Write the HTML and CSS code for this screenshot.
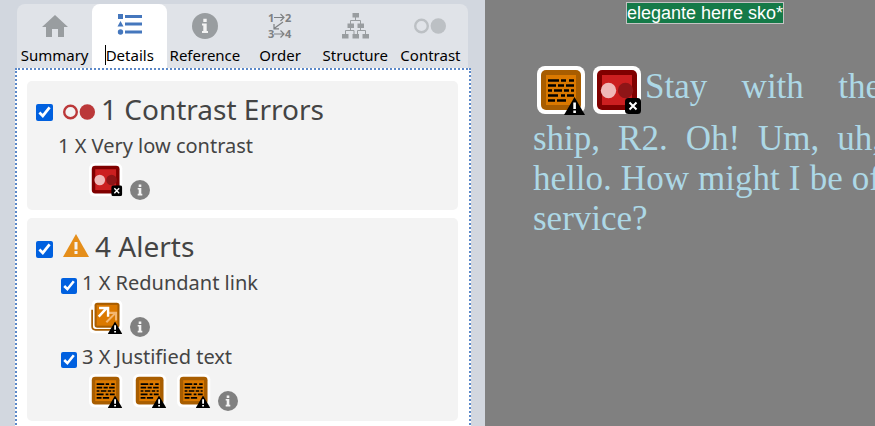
FILE: index.html
```html
<!DOCTYPE html>
<html lang="en">
<head>
<meta charset="utf-8">
<title>Accessibility report</title>
<link rel="stylesheet" href="styles.css">
</head>
<body>
<svg class="sprite" aria-hidden="true">
  <symbol id="badge-alert" viewBox="0 0 21 18"><path d="M10.500 0 21 18H0z" fill="#000"/><path d="M9.300 5.500h2.600v6.500H9.300zM9.300 13.500h2.600v2.500H9.300z" fill="#fff"/></symbol>
  <symbol id="badge-error" viewBox="0 0 16 16"><rect width="16" height="16" rx="3.500" fill="#000"/><path d="M4.500 4.500l7 7M11.500 4.500l-7 7" stroke="#fff" stroke-width="2"/></symbol>
  <symbol id="justified" viewBox="0 0 49 49">
    <rect width="48" height="48" rx="8" fill="#fff"/><rect x="4" y="4" width="40" height="40" rx="5" fill="#a85d00"/><rect x="9" y="9" width="30" height="30" fill="#db7900"/>
    <path d="M11 14.500h11m2 0h5m3 0h5M11 19.500h8m2 0h6m2 0h8M11 24.500h4m2 0h8m2 0h5m2 0h3M11 29.500h10m3 0h4m2 0h7M11 34.500h7m2 0h9" stroke="#000" stroke-width="2.500"/>
    <use href="#badge-alert" x="27" y="31" width="21" height="18"/>
  </symbol>
  <symbol id="low-contrast" viewBox="0 0 49 49">
    <rect width="48" height="48" rx="8" fill="#fff"/><rect x="4" y="4" width="40" height="40" rx="5" fill="#800000"/><rect x="9" y="9" width="30" height="30" fill="#cc1f20"/>
    <circle cx="15.500" cy="24.500" r="7.700" fill="#f0b8b8"/><circle cx="32.500" cy="24.500" r="7.700" fill="#8e1517"/>
    <use href="#badge-error" x="32" y="32" width="16" height="16"/>
  </symbol>
  <symbol id="redundant" viewBox="0 0 49 49">
    <path d="M10 0h31a7 7 0 0 1 7 7v31q0 10-8 10H8q-8 0-8-8V17q0-7 4-9 0-8 6-8z" fill="#fff"/>
    <path d="M4.500 14v24q0 5 5 5h27" fill="none" stroke="#a85d00" stroke-width="2.500"/>
    <rect x="8" y="4" width="36" height="36" rx="4" fill="#a85d00"/><rect x="11" y="7" width="30" height="30" fill="#db7900"/>
    <path d="M25 32 37 20M28 18.500h11v11" fill="none" stroke="#f3b671" stroke-width="3"/>
    <path d="M14 24 26 11M14.500 11.500h13V24" fill="none" stroke="#fff" stroke-width="3.500"/>
    <use href="#badge-alert" x="27" y="31" width="21" height="18"/>
  </symbol>
  <symbol id="info" viewBox="0 0 26 26"><circle cx="13" cy="13" r="13" fill="currentColor"/><path class="info-mark" d="M11.300 5.700h3.400v3.300h-3.400zM10 10.500h4.700V18H16v2h-6v-2h1.300v-5.500H10z"/></symbol>
  <symbol id="contrast" viewBox="0 0 32 16"><circle cx="7.500" cy="8" r="6.300" fill="none" stroke="currentColor" stroke-width="2.400"/><circle cx="24.300" cy="8" r="7.700" fill="currentColor"/></symbol>
</svg>

<main class="page">
  <section class="sidebar">
    <nav class="tabs" aria-label="Report views">
      <button class="tab" type="button"><span class="tab-icon"><svg width="26" height="22" viewBox="0 0 26 22"><path d="M13 0 26 12h-4v10h-6v-8h-6v8H4V12H0z" fill="currentColor"/></svg></span>Summary</button>
      <button class="tab active" type="button"><span class="tab-icon"><svg width="25" height="22" viewBox="0 0 25 22"><path d="M1 1h5v5H1zM3.500 8 6.500 13.500h-6zM8 2h17v3H8zM8 9.500h17v3H8zM8 17.500h17v3H8z" fill="currentColor"/><circle cx="3.500" cy="19" r="2.700" fill="currentColor"/></svg></span><span class="caret">Details</span></button>
      <button class="tab" type="button"><span class="tab-icon"><svg width="26" height="26"><use href="#info"/></svg></span>Reference</button>
      <button class="tab order" type="button"><span class="tab-icon"><svg width="24" height="26" viewBox="0 0 24 26"><g class="digits"><text x="0" y="8.500">1</text><text x="17" y="8.500">2</text><text x="0" y="25">3</text><text x="17" y="25">4</text></g><path d="M6 4.500h10M12.500 1l3.500 3.500L12.500 8M6 21h10m-3.500-3.500L16 21l-3.500 3.500M15 9 6 15.500m0-4.500v4.800h5" fill="none" stroke="currentColor" stroke-width="1.200"/></svg></span>Order</button>
      <button class="tab" type="button"><span class="tab-icon"><svg width="27" height="26" viewBox="0 0 27 26"><path d="M10.500 0h6.500v4.500h-6.500zM5.500 10.500H12V15H5.500zM15.500 10.500H22V15h-6.500zM0 21h6.500v4.500H0zM10.500 21H17v4.500h-6.500zM20.500 21H27v4.500h-6.500z" fill="currentColor"/><path d="M13.500 4v4M8.500 11V7.500h10V11M8.500 15v3M18.500 15v3M3.500 21v-3.500h8.500V21M15.500 21v-3.500h8V21" fill="none" stroke="currentColor"/></svg></span>Structure</button>
      <button class="tab faded" type="button"><span class="tab-icon"><svg width="32" height="16"><use href="#contrast"/></svg></span>Contrast</button>
    </nav>

    <div class="panel">
      <section class="card">
        <h2 class="heading"><input type="checkbox" id="errors" checked><svg class="error" width="32" height="16" aria-hidden="true"><use href="#contrast"/></svg><label for="errors">1 Contrast Errors</label></h2>
        <div class="item">
          <h3 class="item-title">1 X Very low contrast</h3>
          <div class="marks">
            <button class="mark" type="button" aria-label="Very low contrast"><svg width="34" height="34"><use href="#low-contrast"/></svg></button>
            <button class="about" type="button" aria-label="More information"><svg width="20" height="20"><use href="#info"/></svg></button>
          </div>
        </div>
      </section>

      <section class="card">
        <h2 class="heading"><input type="checkbox" id="alerts" checked><svg class="warning" width="26" height="24" viewBox="0 0 26 24" aria-hidden="true"><path d="M13 0 26 23H0z" fill="currentColor"/><path d="M11.500 8h3v7.500h-3zM11.500 17h3v3h-3z" fill="#f3f3f3"/></svg><label for="alerts">4 Alerts</label></h2>
        <div class="item">
          <h3 class="item-title"><input type="checkbox" id="redundant-link" checked><label for="redundant-link">1 X Redundant link</label></h3>
          <div class="marks">
            <button class="mark" type="button" aria-label="Redundant link"><svg width="34" height="34"><use href="#redundant"/></svg></button>
            <button class="about" type="button" aria-label="More information"><svg width="20" height="20"><use href="#info"/></svg></button>
          </div>
        </div>
        <div class="item">
          <h3 class="item-title"><input type="checkbox" id="justified-text" checked><label for="justified-text">3 X Justified text</label></h3>
          <div class="marks">
            <button class="mark" type="button" aria-label="Justified text"><svg width="34" height="34"><use href="#justified"/></svg></button>
            <button class="mark" type="button" aria-label="Justified text"><svg width="34" height="34"><use href="#justified"/></svg></button>
            <button class="mark" type="button" aria-label="Justified text"><svg width="34" height="34"><use href="#justified"/></svg></button>
            <button class="about" type="button" aria-label="More information"><svg width="20" height="20"><use href="#info"/></svg></button>
          </div>
        </div>
      </section>
    </div>
  </section>

  <article class="preview">
    <a class="shoe-link" href="#">elegante herre sko*</a>
    <p class="quote"><svg class="flag" width="49" height="49"><use href="#justified"/></svg><svg class="flag" width="49" height="49"><use href="#low-contrast"/></svg>Stay with the ship, R2. Oh! Um, uh, hello. How might I be of service?</p>
  </article>
</main>
</body>
</html>
```
FILE: styles.css
```css
* { box-sizing: border-box; }
body { margin: 0; font-family: "Noto Sans", "Open Sans", sans-serif; color: #444; }
svg { display: block; flex: none; }
button { border: 0; padding: 0; background: none; font: inherit; color: inherit; }
.sprite { position: absolute; width: 0; height: 0; }
.page { display: flex; min-height: 100vh; background: #808080; }

.sidebar { flex: 0 0 485px; display: flex; flex-direction: column; padding: 4px 14px 0 15px; background: #d2d7df; }
.tabs { display: flex; margin: 0 3px 0 2px; border-radius: 8px 8px 0 0; background: #e0e3e8; }
.tab { flex: 1 1 0; min-width: 0; height: 64px; display: flex; flex-direction: column; align-items: center; justify-content: flex-start; border-radius: 8px 8px 0 0; font-size: 15px; line-height: 20px; color: #000; white-space: nowrap; }
.tab-icon { display: flex; align-items: center; height: 26px; margin: 9px 0 6px; color: #999da0; }
.tab-icon svg { overflow: visible; }
.tab.active { background: #fff; }
.active .tab-icon { color: #4577bd; align-items: flex-start; }
.faded .tab-icon { color: #bcc0c4; }
.order .tab-icon { color: #7e8183; }
.digits { font-size: 11px; font-weight: 700; fill: currentColor; }
.info-mark { fill: #f3f3f3; }
.caret { position: relative; }
.caret::before { content: ""; position: absolute; left: -1px; top: 0; width: 1px; height: 20px; background: #000; }

.panel { flex: 1; padding: 11px 11px 0 10px; border: 2px dotted #5b88c8; border-bottom: 0; background: #fff; }
.card { margin-bottom: 8px; padding: 7px 9px 10px; border-radius: 5px; background: #f3f3f3; }
.heading, .item-title { display: flex; align-items: center; margin: 0; font-weight: 400; }
.heading { height: 42px; margin-bottom: 2px; font-size: 28px; line-height: 42px; }
.heading svg { margin: 0 6px 0 10px; }
.heading input { width: 17px; height: 17px; margin: 6px 0 0; }
.heading .error { color: #bb3839; margin-top: 6px; }
.warning { color: #e58e1a; }
input { accent-color: #0060df; flex: none; }
.item { padding-left: 22px; }
.item + .item { margin-top: 6px; }
.item-title { height: 28px; font-size: 20px; line-height: 28px; }
.item-title input { width: 16px; height: 16px; margin: 6px 5px 0 3px; }
.marks { display: flex; gap: 10px; height: 37px; margin-top: 3px; padding-left: 31px; }
.mark { align-self: flex-start; }
.about { align-self: flex-end; margin-left: -3px; color: #808080; }

.preview { flex: 1; min-width: 0; padding: 2px 0 0 48px; overflow: hidden; }
.shoe-link { display: block; width: max-content; margin-left: 93px; border: 1px solid #c4c4c4; background: #157a48; font: 18px/20px "Liberation Sans", Arial, sans-serif; color: #fff; text-decoration: none; }
.quote { margin: 42px -6px 0 0; font: 35px/40px "Liberation Serif", "Times New Roman", serif; color: #add8e6; text-align: justify; }
.flag { display: inline-block; margin: 0 3px 4px 4px; vertical-align: -21px; }
```
